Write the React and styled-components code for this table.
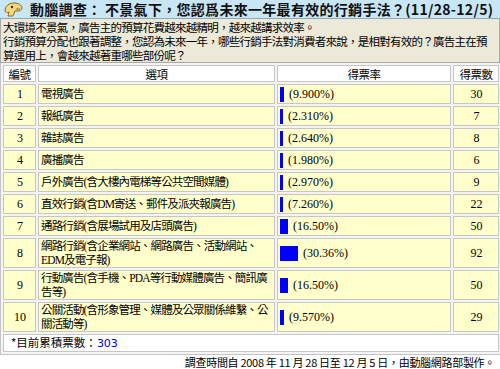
import React from "react";
import styled, { createGlobalStyle } from "styled-components";

const Global = createGlobalStyle`
  html, body { margin: 0; padding: 0; background: #fff; }
  body { font-family: "Liberation Sans", "Noto Sans CJK TC", sans-serif; font-size: 12px; color: #000; }
`;

const Page = styled.div`
  width: 500px;
  height: 369px;
  overflow: hidden;
  display: flex;
  flex-direction: column;
`;

const TitleBar = styled.div`
  height: 20px;
  box-sizing: border-box;
  background: #c8e6f5;
  border-bottom: 1px solid #8fa9b5;
  display: flex;
  align-items: center;
  gap: 6px;
  padding-left: 3px;
`;

const Title = styled.h1`
  margin: 0;
  font-family: "Noto Sans CJK TC", sans-serif;
  font-size: 14px;
  font-weight: bold;
  letter-spacing: 0.3px;
  line-height: 18px;
  white-space: nowrap;
  color: #111;
`;

const Intro = styled.div`
  height: 44px;
  box-sizing: border-box;
  background: #ece9d8;
  border: 1px solid #a8a8a8;
  border-top: none;
  padding: 1px 2px 0 2px;
  font-family: "Noto Sans CJK TC", sans-serif;
  font-size: 11.5px;
  letter-spacing: -0.75px;
  line-height: 14px;
`;

const Table = styled.table`
  width: 500px;
  table-layout: fixed;
  border-collapse: separate;
  border-spacing: 2px;
  background: #f4f4f4;
  border: 1px solid #c4c4c4;
  border-top: none;
  box-sizing: border-box;
`;

const Th = styled.th`
  box-sizing: border-box;
  height: 17px;
  padding: 0;
  background: #fff;
  border: 1px solid #c6c6c6;
  font-family: "Noto Sans CJK TC", sans-serif;
  font-weight: normal;
  font-size: 11.5px;
  letter-spacing: -0.5px;
  line-height: 14px;
  text-align: center;
`;

const Td = styled.td`
  box-sizing: border-box;
  height: 20px;
  padding: 0 1px 0 2px;
  background: #ffffcc;
  border: 1px solid #c6c6c6;
  font-family: "Liberation Serif", "Noto Sans CJK TC", serif;
  font-size: ${(p) => (p.$label ? "11.5px" : "12px")};
  letter-spacing: ${(p) => (p.$label ? "-0.85px" : "0")};
  line-height: 14px;
  text-align: ${(p) => (p.$center ? "center" : "left")};
  vertical-align: middle;
`;

const RateCell = styled.div`
  display: flex;
  align-items: center;
  gap: 5px;
`;

const Bar = styled.span`
  display: inline-block;
  height: 15px;
  background: #0000ff;
  flex: none;
`;

const TotalTd = styled.td`
  box-sizing: border-box;
  height: 17px;
  padding: 0 7px;
  background: #fff;
  border: 1px solid #c6c6c6;
  font-family: "Noto Sans CJK TC", sans-serif;
  font-size: 11.5px;
  line-height: 14px;
`;

const Count = styled.span`
  color: #0000ee;
  font-family: "DejaVu Sans", sans-serif;
  font-size: 11px;
`;

const Footer = styled.div`
  text-align: right;
  padding-right: 5px;
  font-family: "Noto Sans CJK TC", sans-serif;
  font-size: 11px;
  letter-spacing: -0.3px;
  line-height: 14px;
`;

const Mascot = () => (
  <svg width="21" height="16" viewBox="0 0 21 16">
    <path d="M2 10 C2 5 6 2 11 2 C15 2 19 4 19 7 C19 9 17 10 14 10 L12 10 L10 15 L5 15 L6 11 C4 12 2 11 2 10 Z" fill="#f3d77a" stroke="#8a6a2a" strokeWidth="1" />
    <circle cx="9" cy="6" r="1.2" fill="#333" />
    <path d="M13 8 L17 8" stroke="#8a6a2a" strokeWidth="1" />
  </svg>
);

const rows = [
  ["1", "電視廣告", "9.900%", 4, "30"],
  ["2", "報紙廣告", "2.310%", 3, "7"],
  ["3", "雜誌廣告", "2.640%", 3, "8"],
  ["4", "廣播廣告", "1.980%", 3, "6"],
  ["5", "戶外廣告(含大樓內電梯等公共空間媒體)", "2.970%", 3, "9"],
  ["6", "直效行銷(含DM寄送、郵件及派夾報廣告)", "7.260%", 3, "22"],
  ["7", "通路行銷(含展場試用及店頭廣告)", "16.50%", 8, "50"],
  ["8", "網路行銷(含企業網站、網路廣告、活動網站、EDM及電子報)", "30.36%", 18, "92"],
  ["9", "行動廣告(含手機、PDA等行動媒體廣告、簡訊廣告等)", "16.50%", 8, "50"],
  ["10", "公關活動(含形象管理、媒體及公眾關係維繫、公關活動等)", "9.570%", 4, "29"],
];

export default function App() {
  return (
    <Page>
      <Global />
      <TitleBar>
        <Mascot />
        <Title>動腦調查： 不景氣下，您認爲未來一年最有效的行銷手法？(11/28-12/5)</Title>
      </TitleBar>
      <Intro>
        大環境不景氣，廣告主的預算花費越來越精明，越來越講求效率。
        <br />
        行銷預算分配也跟著調整，您認為未來一年，哪些行銷手法對消費者來說，是相對有效的？廣告主在預算運用上，會越來越著重哪些部份呢？
      </Intro>
      <Table>
        <colgroup>
          <col style={{ width: 33 }} />
          <col style={{ width: 237 }} />
          <col style={{ width: 174 }} />
          <col style={{ width: 46 }} />
        </colgroup>
        <thead>
          <tr>
            <Th>編號</Th>
            <Th>選項</Th>
            <Th>得票率</Th>
            <Th>得票數</Th>
          </tr>
        </thead>
        <tbody>
          {rows.map(([n, label, pct, w, votes]) => (
            <tr key={n}>
              <Td $center>{n}</Td>
              <Td $label>{label}</Td>
              <Td>
                <RateCell>
                  <Bar style={{ width: w }} />
                  <span>({pct})</span>
                </RateCell>
              </Td>
              <Td $center>{votes}</Td>
            </tr>
          ))}
          <tr>
            <TotalTd colSpan={4}>
              *目前累積票數：<Count>303</Count>
            </TotalTd>
          </tr>
        </tbody>
      </Table>
      <Footer>調查時間自 2008 年 11 月 28 日至 12 月 5 日，由動腦網路部製作。</Footer>
    </Page>
  );
}
